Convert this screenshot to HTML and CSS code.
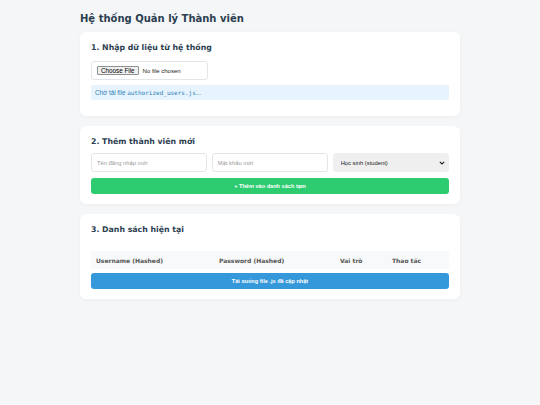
FILE: index.html
```html
<!DOCTYPE html>
<html lang="vi">
<head>
  <meta charset="UTF-8">
  <title>Hệ thống Quản lý Thành viên</title>
  <link rel="stylesheet" href="styles.css">
</head>
<body>
  <div class="container">
    <h1>Hệ thống Quản lý Thành viên</h1>

    <div class="card">
      <h2>1. Nhập dữ liệu từ hệ thống</h2>
      <div class="file-box">
        <input type="file" id="fileInput" accept=".js">
      </div>
      <div class="status">Chờ tải file <code>authorized_users.js</code>...</div>
    </div>

    <div class="card">
      <h2 class="form-title">2. Thêm thành viên mới</h2>
      <div class="form-row">
        <input type="text" id="newUser" placeholder="Tên đăng nhập mới">
        <input type="text" id="newPass" placeholder="Mật khẩu mới">
        <div class="select-wrap">
          <select id="newRole">
            <option value="student">Học sinh (student)</option>
            <option value="teacher">Giáo viên (teacher)</option>
            <option value="admin">Quản trị (admin)</option>
          </select>
          <svg class="select-arrow" width="6" height="4" viewBox="0 0 6 4">
            <path d="M0.8 0.8 L3 3 L5.2 0.8" fill="none" stroke="#222" stroke-width="1.1"/>
          </svg>
        </div>
      </div>
      <button class="btn btn-green" id="addBtn">+ Thêm vào danh sách tạm</button>
    </div>

    <div class="card">
      <h2 class="list-title">3. Danh sách hiện tại</h2>
      <table class="user-table">
        <thead>
          <tr>
            <th class="col-user">Username (Hashed)</th>
            <th class="col-pass">Password (Hashed)</th>
            <th class="col-role">Vai trò</th>
            <th>Thao tác</th>
          </tr>
        </thead>
        <tbody id="userList"></tbody>
      </table>
      <button class="btn btn-blue" id="downloadBtn">Tải xuống file .js đã cập nhật</button>
    </div>
  </div>
</body>
</html>
```

FILE: styles.css
```css
body {
  margin: 0;
  background-color: #f4f6f7;
  font-family: "DejaVu Sans", Verdana, sans-serif;
  color: #2c3e50;
}

.container {
  width: 380px;
  margin: 0 auto;
  padding-top: 11px;
}

h1 {
  font-size: 10px;
  line-height: 15px;
  margin: 0 0 6px 0;
}

.card {
  background: #fff;
  border-radius: 6px;
  padding: 10px 11px 16px 11px;
  margin-bottom: 10px;
  box-shadow: 0 1px 4px rgba(0, 0, 0, 0.04);
}

.card + .card {
  padding-bottom: 10px;
}

h2 {
  font-size: 7.8px;
  line-height: 12px;
  margin: 0 0 7px 0;
}

.file-box {
  width: 117px;
  height: 19px;
  box-sizing: border-box;
  border: 1px solid #e3e6e8;
  border-radius: 3px;
  padding: 0 5px;
  display: flex;
  align-items: center;
}

.file-box input {
  font-family: "Liberation Sans", Arial, sans-serif;
  font-size: 6px;
  width: 100%;
  color: #222;
}

.file-box input::file-selector-button {
  font-family: "Liberation Sans", Arial, sans-serif;
  font-size: 6.3px;
  height: 9px;
  padding: 0 3px;
  margin-right: 4px;
  border: 1px solid #8f8f8f;
  border-radius: 1px;
  background: #efefef;
  color: #000;
}

.status {
  margin-top: 5px;
  height: 15px;
  line-height: 15px;
  background: #e8f4fd;
  border-radius: 2px;
  padding: 0 4px;
  font-family: "Liberation Sans", Arial, sans-serif;
  font-size: 6.3px;
  color: #2980b9;
}

.status code {
  font-family: "DejaVu Sans Mono", monospace;
  font-size: 6px;
}

.form-title {
  margin-bottom: 5px;
}

.form-row {
  display: grid;
  grid-template-columns: repeat(3, minmax(0, 1fr));
  gap: 4.5px;
  margin-bottom: 6px;
}

.form-row input,
.form-row select {
  display: block;
  width: 100%;
  height: 19px;
  margin: 0;
  box-sizing: border-box;
  border: 1px solid #e3e6e8;
  border-radius: 3px;
  padding: 0 5px;
  font-family: "Liberation Sans", Arial, sans-serif;
  font-size: 5.8px;
  color: #222;
  background: #fff;
}

.form-row input::placeholder {
  color: #999;
}

.select-wrap {
  position: relative;
}

.form-row select {
  appearance: none;
  background: #efefef;
  border-color: #efefef;
  padding: 0 7px;
  outline: none;
}

.select-arrow {
  position: absolute;
  right: 4px;
  top: 8px;
  pointer-events: none;
}

.btn {
  display: block;
  width: 100%;
  height: 16px;
  border: none;
  border-radius: 3px;
  color: #fff;
  font-family: "Liberation Sans", Arial, sans-serif;
  font-weight: bold;
  font-size: 5.6px;
  cursor: pointer;
}

.btn-green {
  background: #2ecc71;
}

.btn-blue {
  background: #3498db;
}

.list-title {
  margin-bottom: 15px;
}

.user-table {
  width: 100%;
  border-collapse: collapse;
  margin-bottom: 4px;
}

.user-table th {
  background: #f8f9fa;
  height: 18px;
  padding: 0 5px;
  text-align: left;
  font-size: 6px;
  color: #555;
}

.col-user {
  width: 113px;
}

.col-pass {
  width: 111px;
}

.col-role {
  width: 42px;
}
```
